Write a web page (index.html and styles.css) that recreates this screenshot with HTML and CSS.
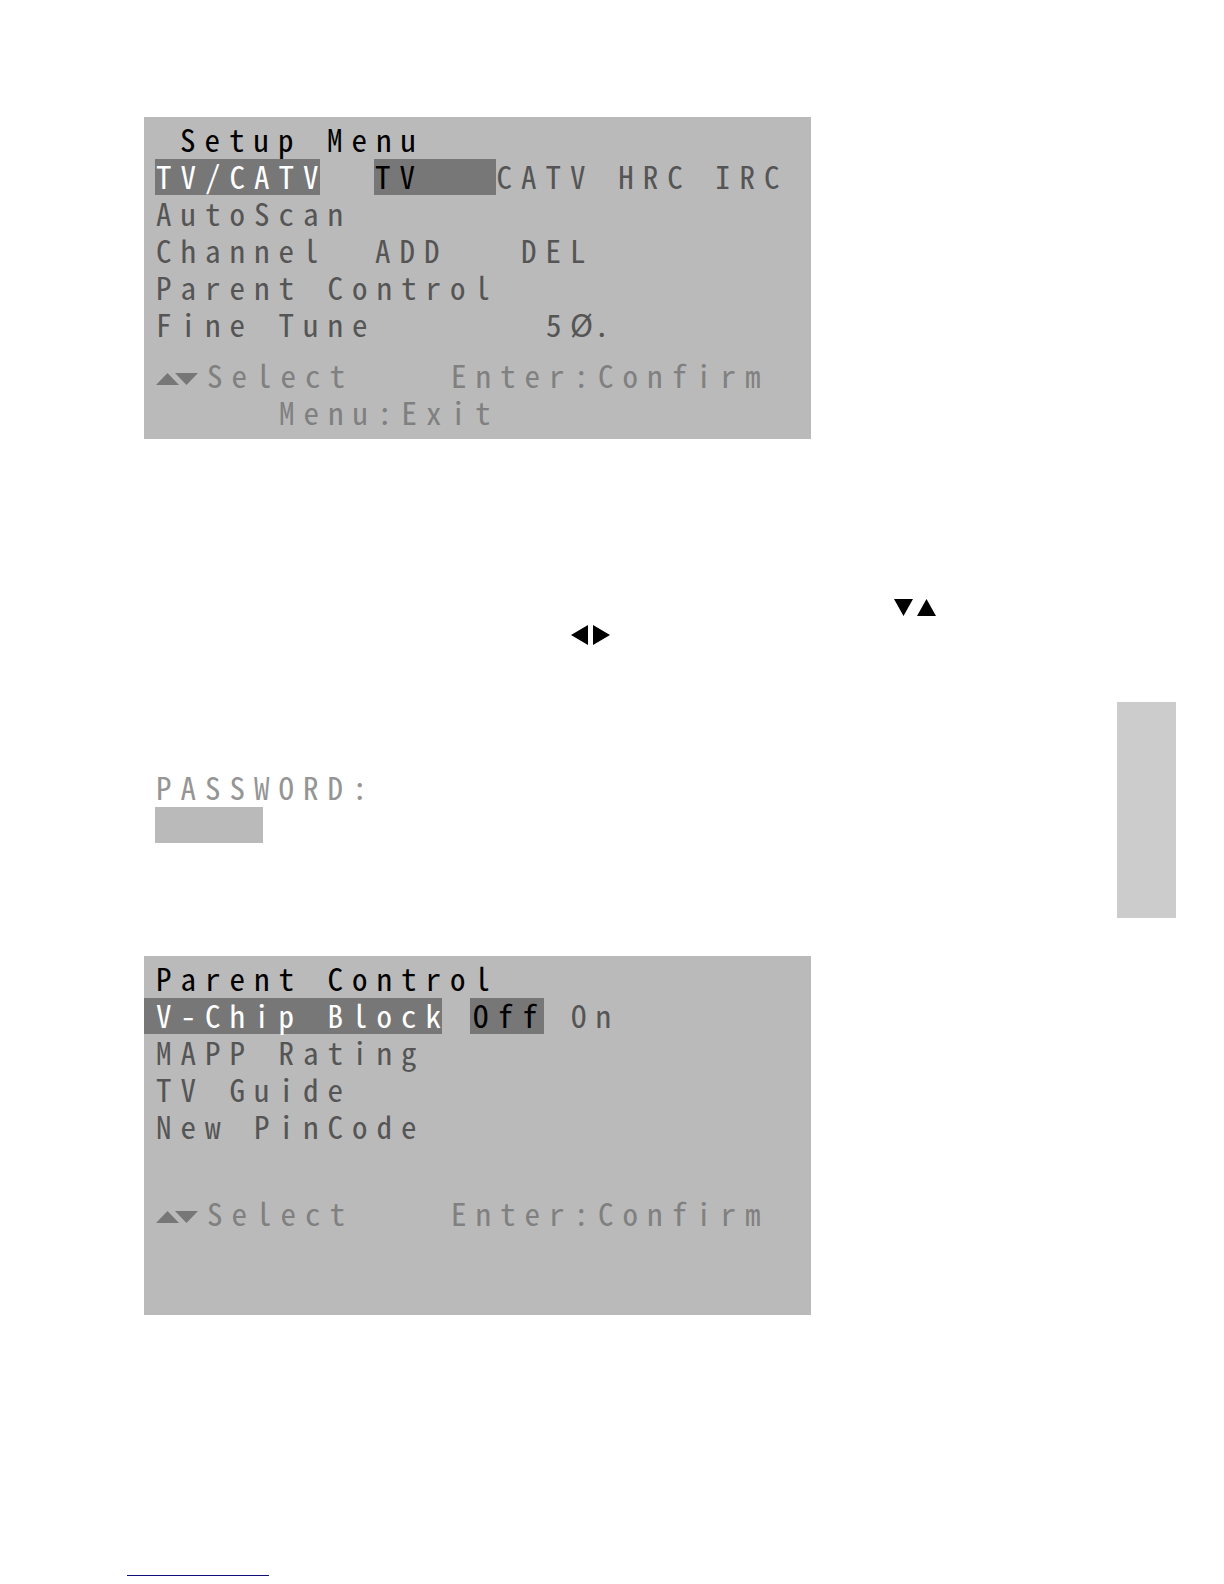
FILE: index.html
```html
<!DOCTYPE html>
<html lang="en">
<head>
<meta charset="utf-8">
<meta name="viewport" content="width=device-width, initial-scale=1">
<title>Setup Menu</title>
<link rel="stylesheet" href="styles.css">
</head>
<body>
<div class="page">
  <main class="content">
    <section class="screen">
      <h1 class="row title indent">Setup Menu</h1>
      <div class="row">
        <div class="label"><button class="item selected mode">TV/CATV</button></div>
        <button class="item option wide current">TV</button>
        <button class="item option wide">CATV</button>
        <button class="item option">HRC</button>
        <button class="item option">IRC</button>
      </div>
      <div class="row"><button class="item">AutoScan</button></div>
      <div class="row">
        <div class="label"><button class="item">Channel</button></div>
        <button class="item option wider">ADD</button>
        <button class="item option">DEL</button>
      </div>
      <div class="row"><button class="item">Parent Control</button></div>
      <div class="row">
        <div class="label tune"><button class="item">Fine Tune</button></div>
        <output class="item value"><span>5</span><span>Ø</span><span>.</span></output>
      </div>
      <footer class="help">
        <div class="row">
          <svg class="arrows" viewBox="0 0 42 12" aria-hidden="true"><path d="M0 12 11.500 0 23 12zM19 0H42L30.500 12z"/></svg>
          <span class="hint">Select</span><span>Enter:Confirm</span>
        </div>
        <div class="row exit">Menu:Exit</div>
      </footer>
    </section>

    <div class="keys" aria-hidden="true">
      <svg class="pair vertical" viewBox="0 0 43 17"><path d="M0 0H19L9.500 17zM23 17 32.500 0 42 17z"/></svg>
      <svg class="pair horizontal" viewBox="0 0 39 20"><path d="M0 10 17 0V20zM22 0 39 10 22 20z"/></svg>
    </div>

    <form class="password">
      <label class="row" for="pin">PASSWORD:</label>
      <input class="pin" id="pin" type="password">
    </form>

    <section class="screen parent">
      <h2 class="row title">Parent Control</h2>
      <div class="row">
        <div class="label chip"><button class="item selected block">V-Chip Block</button></div>
        <button class="item option current off">Off</button>
        <button class="item option">On</button>
      </div>
      <div class="row"><button class="item">MAPP Rating</button></div>
      <div class="row"><button class="item">TV Guide</button></div>
      <div class="row"><button class="item">New PinCode</button></div>
      <footer class="help">
        <div class="row">
          <svg class="arrows" viewBox="0 0 42 12" aria-hidden="true"><path d="M0 12 11.500 0 23 12zM19 0H42L30.500 12z"/></svg>
          <span class="hint">Select</span><span>Enter:Confirm</span>
        </div>
      </footer>
    </section>
    <hr class="rule">
  </main>
  <aside class="tab"></aside>
</div>
</body>
</html>
```
FILE: styles.css
```css
* { box-sizing: border-box; }

body {
  margin: 0;
  background: #fff;
  color: #555;
  font-family: "Noto Sans Mono CJK JP", "Noto Sans CJK JP", monospace;
  font-size: 31px;
  line-height: 34px;
  letter-spacing: 9px;
  font-feature-settings: "hwid";
}

.page {
  display: flex;
  justify-content: space-between;
  padding: 117px 48px 0 127px;
}

.content { flex: 1; }

.screen {
  max-width: 667px;
  margin-left: 17px;
  padding: 5px 0 7px 11px;
  background: #bababa;
}

.row {
  display: flex;
  height: 37px;
  margin: 0;
  padding-left: 1px;
  white-space: pre;
}

.row:has(.item) { padding-left: 0; }

.title {
  color: #000;
  font-size: 31px;
  font-weight: 400;
}

.indent { padding-left: 25px; }

.item {
  display: flex;
  height: 36px;
  padding: 0 0 0 1px;
  border: 0;
  background: none;
  color: inherit;
  font: inherit;
  letter-spacing: inherit;
  font-feature-settings: inherit;
  text-align: left;
  white-space: nowrap;
}

.label { flex: 0 0 219px; }
.tune { flex-basis: 390px; }
.chip { flex-basis: 315px; }
.value span { width: 24px; }
.option { width: 98px; }
.wide { width: 123px; }
.wider { width: 146px; }

.selected { background: #777; color: #fff; }
.mode { width: 165px; }
.block { width: 298px; margin-left: -11px; padding-left: 12px; }
.current { background: #777; color: #000; }
.off { width: 74px; margin-right: 26px; padding-left: 3px; }

.help { margin-top: 14px; color: #808080; }
.arrows { width: 42px; height: 12px; margin: 15px 9px 0 0; fill: #777; }
.hint { width: 244px; }
.exit { padding-left: 124px; }

.keys {
  display: grid;
  gap: 9px;
  margin-top: 160px;
  padding-left: 444px;
}

.pair { fill: #000; }
.vertical { width: 43px; height: 17px; margin-left: 323px; }
.horizontal { width: 39px; height: 20px; }

.password {
  margin: 125px 0 0 28px;
  color: #959595;
}

.pin {
  display: block;
  width: 108px;
  height: 36px;
  padding: 0 8px;
  border: 0;
  background: #bababa;
  font: inherit;
}

.parent { margin-top: 113px; padding-bottom: 82px; }
.parent .help { margin-top: 50px; }

.rule {
  width: 142px;
  height: 1px;
  margin: 260px 0 8px;
  border: 0;
  background: #10107c;
}

.tab {
  flex: 0 0 59px;
  height: 216px;
  margin-top: 585px;
  background: #ccc;
}
```
